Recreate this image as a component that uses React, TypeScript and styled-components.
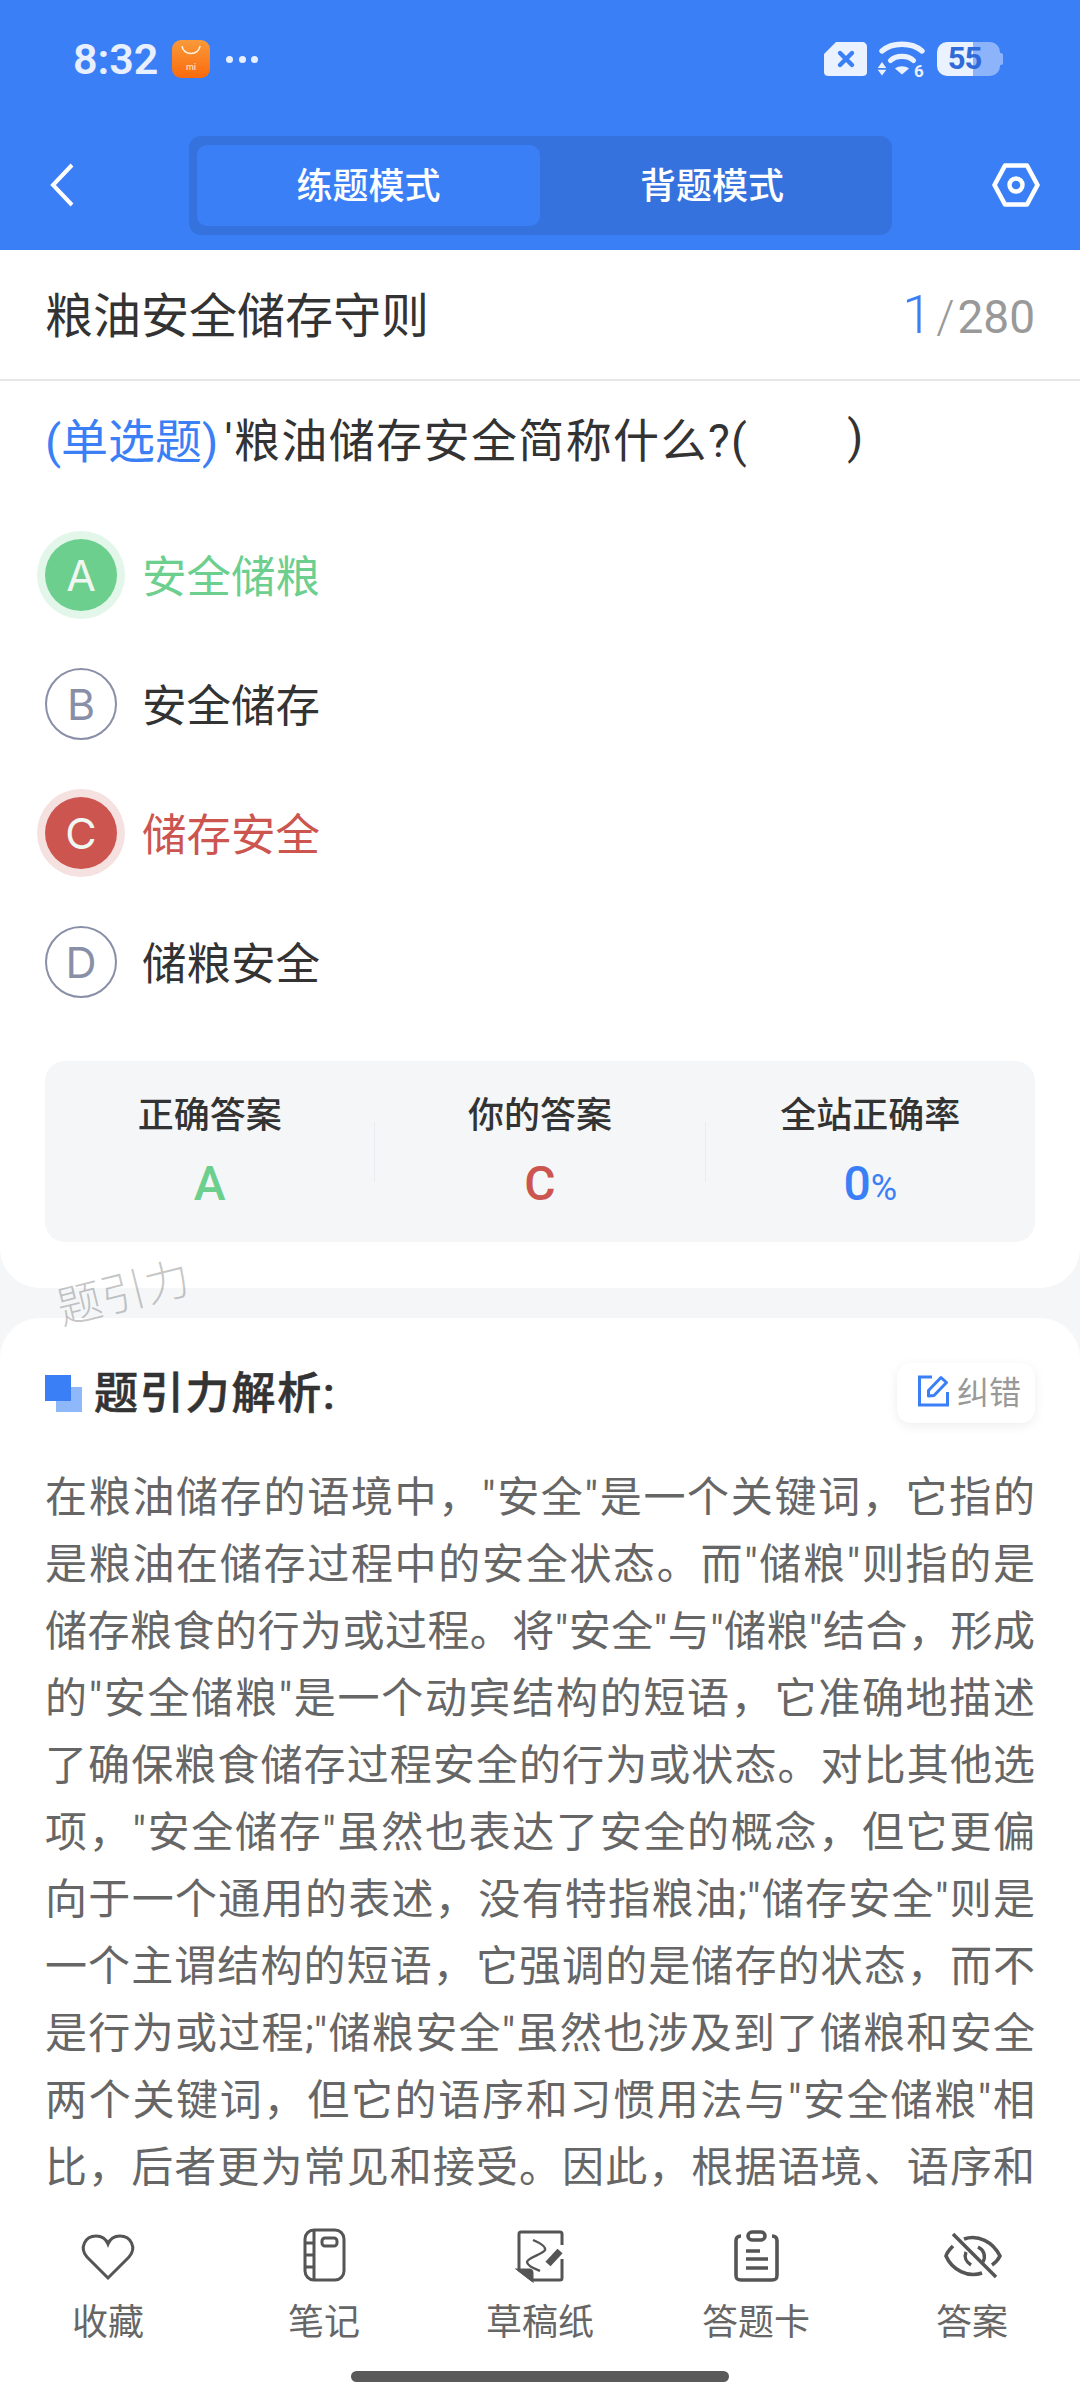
import styled, { createGlobalStyle } from 'styled-components';

const BLUE = '#3b7ff6';
const GREEN = '#6ccf8e';
const RED = '#cc5550';

const GlobalStyle = createGlobalStyle`
	html,
	body {
		margin: 0;
		padding: 0;
		background: #f4f6f8;
		font-family: Roboto, 'Noto Sans CJK SC', sans-serif;
	}
	* {
		box-sizing: border-box;
	}
`;

const OPTIONS = [
	{ key: 'A', text: '安全储粮', state: 'right' },
	{ key: 'B', text: '安全储存', state: 'idle' },
	{ key: 'C', text: '储存安全', state: 'wrong' },
	{ key: 'D', text: '储粮安全', state: 'idle' },
] as const;

const ANALYSIS = [
	'在粮油储存的语境中，"安全"是一个关键词，它指的',
	'是粮油在储存过程中的安全状态。而"储粮"则指的是',
	'储存粮食的行为或过程。将"安全"与"储粮"结合，形成',
	'的"安全储粮"是一个动宾结构的短语，它准确地描述',
	'了确保粮食储存过程安全的行为或状态。对比其他选',
	'项，"安全储存"虽然也表达了安全的概念，但它更偏',
	'向于一个通用的表述，没有特指粮油;"储存安全"则是',
	'一个主谓结构的短语，它强调的是储存的状态，而不',
	'是行为或过程;"储粮安全"虽然也涉及到了储粮和安全',
	'两个关键词，但它的语序和习惯用法与"安全储粮"相',
	'比，后者更为常见和接受。因此，根据语境、语序和',
];

const HeartIcon = () => (
	<TabSvg viewBox="0 0 64 64">
		<path d="M32 55 L11 34 C3 25 9 13 20 13 C26 13 30 16 32 21 C34 16 38 13 44 13 C55 13 61 25 53 34 Z" />
	</TabSvg>
);

const NotebookIcon = () => (
	<TabSvg viewBox="0 0 64 64">
		<rect x="13" y="7" width="39" height="50" rx="9" />
		<path d="M22 7 V57 M13 20 H22 M13 32 H22 M13 44 H22" />
		<rect x="30" y="15" width="15" height="8" rx="3" />
	</TabSvg>
);

const DraftIcon = () => (
	<TabSvg viewBox="0 0 64 64">
		<path d="M54 22 V11 C54 9.5 53 9 52 9 H13 C12 9 11 9.5 11 11 V47 L24 57 H52 C53 57 54 56.5 54 55 V36" />
		<path d="M25 17 C32 20 38 24 37 27 C35 31 19 35 19 39 C19 43 27 46 32 48" strokeWidth="2.4" />
		<path d="M40 41 L52 28" strokeWidth="7" />
		<path d="M11 47 H21 C23 47 24 48 24 50 V57 Z" fill="#555" />
	</TabSvg>
);

const ClipboardIcon = () => (
	<TabSvg viewBox="0 0 64 64" $weight={3.6}>
		<path d="M17 13 C13 13 12 15 12 18 V52 C12 56 13 57 17 57 H48 C52 57 53 56 53 52 V18 C53 15 52 13 48 13" />
		<rect x="24" y="9" width="17" height="8" rx="4" />
		<path d="M22 28 H36 M22 36 H44 M22 45 H44" />
	</TabSvg>
);

const EyeOffIcon = () => (
	<TabSvg viewBox="0 0 64 64" $weight={3.6}>
		<path d="M13 11 L56 54" />
		<path d="M24 16 C38 11 53 19 60 33 C58 37 55 40 52 42" />
		<path d="M13 23 C10 26 7 29 6 33 C12 47 28 55 42 50" />
		<path d="M38 24 C44 27 46 33 43 39 M26 29 C24 34 26 39 31 42" strokeWidth="3.4" />
	</TabSvg>
);

const TABS = [
	{ label: '收藏', Icon: HeartIcon },
	{ label: '笔记', Icon: NotebookIcon },
	{ label: '草稿纸', Icon: DraftIcon },
	{ label: '答题卡', Icon: ClipboardIcon },
	{ label: '答案', Icon: EyeOffIcon },
];

export default function App() {
	return (
		<>
			<GlobalStyle />
			<Screen>
				<Header>
					<StatusBar>
						<StatusLeft>
							<Clock>8:32</Clock>
							<AppBadge viewBox="0 0 38 38">
								<defs>
									<linearGradient id="badge" x1="0" y1="0" x2="0" y2="1">
										<stop offset="0" stopColor="#f99a3a" />
										<stop offset="1" stopColor="#fb6a0c" />
									</linearGradient>
								</defs>
								<rect width="38" height="38" rx="9" fill="url(#badge)" />
								<path d="M10 6 C11 16 27 16 28 6" fill="none" stroke="#fff3e2" strokeWidth="1.6" />
								<text x="19" y="30" textAnchor="middle" fontSize="9" fontWeight="500" fill="#ffdcb8">
									mi
								</text>
							</AppBadge>
							<Dots>
								<i />
								<i />
								<i />
							</Dots>
						</StatusLeft>
						<StatusRight>
							<svg width="44" height="35" viewBox="0 0 44 35">
								<path
									d="M12 0 H38 C41 0 43 2 43 5 V30 C43 33 41 34 38 34 H5 C2 34 0 33 0 30 V12 Z"
									fill="#eaf1ff"
								/>
								<path d="M16 11 L28 23 M28 11 L16 23" stroke={BLUE} strokeWidth="4.4" strokeLinecap="round" />
							</svg>
							<WifiIcon viewBox="-1 0 50 40">
								<g fill="none" stroke="#eaf1ff" strokeLinecap="round">
									<path d="M4 10 C14 1 34 1 44 10" strokeWidth="5.4" />
									<path d="M12.5 19.5 C18 14 30 14 35.5 19.5" strokeWidth="5.2" />
								</g>
								<g fill="#eaf1ff">
									<path d="M17 27.5 C21 24.5 27 24.5 31 27.5 L24 33.5 Z" />
									<path d="M4 21 L8.3 27 H-0.3 Z" />
									<path d="M-0.3 28.8 H8.3 L4 34.5 Z" />
									<text x="41" y="35.5" textAnchor="middle" fontSize="17" fontWeight="700" fontFamily="Roboto">
										6
									</text>
								</g>
							</WifiIcon>
							<Battery>55</Battery>
						</StatusRight>
					</StatusBar>
					<NavBar>
						<BackButton>
							<svg width="24" height="44" viewBox="0 0 24 44">
								<path d="M22 2 L3 22 L22 42" fill="none" stroke="#fff" strokeWidth="4" />
							</svg>
						</BackButton>
						<ModeSwitch>
							<ModeTab $active>练题模式</ModeTab>
							<ModeTab>背题模式</ModeTab>
						</ModeSwitch>
						<SettingsButton>
							<svg width="48" height="44" viewBox="0 0 48 44">
								<path d="M13 2.5 H35 L45.5 22 L35 41.5 H13 L2.5 22 Z" fill="none" stroke="#fff" strokeWidth="4.6" strokeLinejoin="round" />
								<circle cx="24" cy="22" r="6.5" fill="none" stroke="#fff" strokeWidth="4.4" />
							</svg>
						</SettingsButton>
					</NavBar>
				</Header>

				<Main>
					<QuestionCard>
						<TitleRow>
							<ChapterTitle>粮油安全储存守则</ChapterTitle>
							<Counter>
								<CounterCurrent>1</CounterCurrent>
								<CounterSlash>/</CounterSlash>280
							</Counter>
						</TitleRow>
						<Question>
							<QuestionType>(单选题)</QuestionType>
							<QuestionText>'粮油储存安全简称什么?(</QuestionText>
							<QuestionBlank />
							<QuestionText>)</QuestionText>
						</Question>
						<OptionList>
							{OPTIONS.map((option) => (
								<OptionRow key={option.key}>
									<OptionMark $state={option.state}>{option.key}</OptionMark>
									<OptionText $state={option.state}>{option.text}</OptionText>
								</OptionRow>
							))}
						</OptionList>
						<StatsPanel>
							<StatColumn>
								<StatLabel>正确答案</StatLabel>
								<StatValue $color={GREEN}>A</StatValue>
							</StatColumn>
							<StatDivider />
							<StatColumn>
								<StatLabel>你的答案</StatLabel>
								<StatValue $color={RED}>C</StatValue>
							</StatColumn>
							<StatDivider />
							<StatColumn>
								<StatLabel>全站正确率</StatLabel>
								<StatValue $color={BLUE}>
									0<small>%</small>
								</StatValue>
							</StatColumn>
						</StatsPanel>
					</QuestionCard>

					<Watermark>题引力</Watermark>

					<AnalysisCard>
						<AnalysisHead>
							<AnalysisTitle>
								<TitleMark />
								<TitleText>题引力解析:</TitleText>
							</AnalysisTitle>
							<ReportButton>
								<svg width="34" height="34" viewBox="0 0 34 34">
									<g fill="none" stroke={BLUE} strokeWidth="3">
										<path d="M15 4 H2.5 V32 H30.5 V19" />
										<path d="M11.5 17.5 L24 4.5 L29.5 9.5 L17 22.5 L11.5 23 Z" strokeLinejoin="round" />
									</g>
								</svg>
								纠错
							</ReportButton>
						</AnalysisHead>
						{ANALYSIS.map((line) => (
							<AnalysisLine key={line}>{line}</AnalysisLine>
						))}
					</AnalysisCard>
				</Main>

				<BottomBar>
					<TabRow>
						{TABS.map(({ label, Icon }) => (
							<TabItem key={label}>
								<Icon />
								<TabLabel>{label}</TabLabel>
							</TabItem>
						))}
					</TabRow>
					<HomeIndicator />
				</BottomBar>
			</Screen>
		</>
	);
}

const Screen = styled.div`
	width: 1080px;
	height: 2400px;
	display: flex;
	flex-direction: column;
	overflow: hidden;
	background: #f4f6f8;
`;

const Header = styled.header`
	flex: none;
	height: 250px;
	background: ${BLUE};
`;

const StatusBar = styled.div`
	height: 118px;
	padding: 0 80px 0 73px;
	display: flex;
	align-items: center;
	justify-content: space-between;
`;

const StatusLeft = styled.div`
	display: flex;
	align-items: center;
`;

const Clock = styled.span`
	font-family: Roboto, sans-serif;
	font-size: 43px;
	font-weight: 600;
	color: #e8efff;
`;

const AppBadge = styled.svg`
	width: 38px;
	height: 38px;
	margin-left: 14px;
`;

const Dots = styled.div`
	display: flex;
	gap: 5.5px;
	margin-left: 16px;

	i {
		width: 7px;
		height: 7px;
		border-radius: 50%;
		background: #e8efff;
	}
`;

const StatusRight = styled.div`
	display: flex;
	align-items: center;
	gap: 9px;
`;

const WifiIcon = styled.svg`
	width: 50px;
	height: 40px;
	margin-top: 4px;
`;

const Battery = styled.div`
	position: relative;
	width: 63px;
	height: 34px;
	margin-left: 1px;
	border-radius: 10px;
	background: linear-gradient(90deg, #eaf1ff 0 36px, #8db4fb 36px);
	font-family: Roboto, sans-serif;
	font-size: 31px;
	font-weight: 700;
	line-height: 34px;
	letter-spacing: -1px;
	text-align: center;
	color: #2f6bd8;
	padding-right: 8px;

	&::after {
		content: '';
		position: absolute;
		right: -3px;
		top: 11px;
		width: 3px;
		height: 12px;
		border-radius: 0 2px 2px 0;
		background: #8db4fb;
	}
`;

const NavBar = styled.div`
	display: grid;
	grid-template-columns: 189px 703px 1fr;
	padding-top: 18px;
`;

const BackButton = styled.div`
	display: flex;
	align-items: center;
	padding-left: 50px;
	padding-bottom: 2px;
`;

const ModeSwitch = styled.div`
	height: 99px;
	padding: 9px 8px;
	display: grid;
	grid-template-columns: 343px 1fr;
	background: #3572dd;
	border-radius: 12px;
`;

const ModeTab = styled.div<{ $active?: boolean }>`
	display: flex;
	align-items: center;
	justify-content: center;
	padding-bottom: 6px;
	border-radius: 10px;
	font-size: 36px;
	font-weight: 500;
	color: #fff;
	background: ${({ $active }) => ($active ? BLUE : 'transparent')};
`;

const SettingsButton = styled.div`
	display: flex;
	align-items: center;
	justify-content: flex-end;
	padding-right: 40px;
	padding-bottom: 2px;
`;

const Main = styled.main`
	position: relative;
	flex: 1;
	min-height: 0;
	overflow: hidden;
`;

const QuestionCard = styled.section`
	height: 1038px;
	background: #fff;
	border-radius: 0 0 40px 40px;
`;

const TitleRow = styled.div`
	height: 131px;
	padding: 0 45px;
	display: flex;
	align-items: center;
	justify-content: space-between;
	border-bottom: 2px solid #e6e6e6;
`;

const ChapterTitle = styled.h1`
	margin: 0 0 6px;
	font-size: 48px;
	font-weight: 400;
	color: #333;
`;

const Counter = styled.div`
	display: flex;
	align-items: baseline;
	font-family: Roboto, sans-serif;
	font-size: 46px;
	font-weight: 400;
	color: #999;
`;

const CounterCurrent = styled.span`
	font-size: 54px;
	font-weight: 300;
	color: ${BLUE};
`;

const CounterSlash = styled.span`
	margin: 0 3px 0 4px;
	font-weight: 300;
`;

const Question = styled.div`
	margin-top: 28px;
	padding: 0 45px 4px;
	height: 60px;
	display: flex;
	align-items: center;
	font-size: 46px;
	white-space: pre;
`;

const QuestionType = styled.span`
	font-size: 47px;
	color: ${BLUE};
`;

const QuestionText = styled.span`
	margin-left: 6px;
	color: #333;
	letter-spacing: 1.4px;
`;

const QuestionBlank = styled.span`
	width: 93px;
`;

const OptionList = styled.div`
	margin-top: 41px;
`;

const OptionRow = styled.div`
	height: 129px;
	padding-left: 45px;
	display: flex;
	align-items: center;
	gap: 25px;
`;

const stateColor = (state: string) => {
	if (state === 'right') return GREEN;
	if (state === 'wrong') return RED;
	return '#333';
};

const OptionMark = styled.div<{ $state: string }>`
	width: 72px;
	height: 72px;
	display: flex;
	align-items: center;
	justify-content: center;
	border-radius: 50%;
	font-family: Inter, sans-serif;
	font-size: 43px;
	font-weight: 400;
	color: ${({ $state }) => ($state === 'idle' ? '#8a8fa8' : '#f0f7f2')};
	background: ${({ $state }) => ($state === 'idle' ? '#fff' : stateColor($state))};
	border: ${({ $state }) => ($state === 'idle' ? '2px solid #8a8fa8' : 'none')};
	box-shadow: ${({ $state }) =>
		$state === 'right' ? '0 0 0 8px #e2f6ea' : $state === 'wrong' ? '0 0 0 8px #f6e1e1' : 'none'};
`;

const OptionText = styled.span<{ $state: string }>`
	margin-bottom: 2px;
	font-size: 44.5px;
	color: ${({ $state }) => stateColor($state)};
`;

const StatsPanel = styled.div`
	margin: 35px 45px 0;
	height: 181px;
	display: flex;
	background: #f4f6f8;
	border-radius: 20px;
`;

const StatColumn = styled.div`
	flex: 1;
	padding-top: 30px;
	display: flex;
	flex-direction: column;
	align-items: center;
`;

const StatDivider = styled.div`
	flex: none;
	width: 1px;
	height: 60px;
	margin-top: 61px;
	background: #e9ebee;
`;

const StatLabel = styled.div`
	height: 50px;
	font-size: 36px;
	line-height: 50px;
	font-weight: 500;
	color: #333;
`;

const StatValue = styled.div<{ $color: string }>`
	margin-top: 16px;
	height: 54px;
	font-family: Roboto, sans-serif;
	font-size: 48px;
	line-height: 54px;
	font-weight: 500;
	color: ${({ $color }) => $color};

	small {
		font-size: 36px;
		font-weight: 400;
	}
`;

const Watermark = styled.div`
	position: absolute;
	left: 56px;
	top: 1014px;
	z-index: 2;
	font-size: 45px;
	font-weight: 300;
	line-height: 60px;
	color: rgba(0, 0, 0, 0.22);
	transform: rotate(-14deg);
`;

const AnalysisCard = styled.section`
	margin-top: 30px;
	height: 900px;
	padding: 45px 45px 0;
	background: #fff;
	border-radius: 40px 40px 0 0;
`;

const AnalysisHead = styled.div`
	height: 60px;
	margin-bottom: 41px;
	display: flex;
	align-items: center;
	justify-content: space-between;
`;

const AnalysisTitle = styled.h2`
	margin: 0;
	display: flex;
	align-items: center;
	gap: 12px;
`;

const TitleText = styled.span`
	margin-bottom: 6px;
	font-size: 44px;
	font-weight: 500;
	letter-spacing: 1.8px;
	color: #333;
	-webkit-text-stroke: 0.6px #333;
`;

const TitleMark = styled.span`
	position: relative;
	width: 37px;
	height: 37px;

	&::before,
	&::after {
		content: '';
		position: absolute;
		width: 26px;
	}
	&::before {
		right: 0;
		bottom: 0;
		height: 25px;
		background: #8fb8fb;
	}
	&::after {
		left: 0;
		top: 0;
		height: 26px;
		background: ${BLUE};
	}
`;

const ReportButton = styled.div`
	width: 138px;
	height: 60px;
	padding: 0 0 6px 20px;
	display: flex;
	align-items: center;
	gap: 6px;
	background: #fff;
	border-radius: 14px;
	box-shadow: 0 3px 12px rgba(0, 0, 0, 0.07);
	font-size: 32px;
	color: #999;
`;

const AnalysisLine = styled.div`
	height: 67px;
	font-size: 42px;
	line-height: 67px;
	color: #666;
	text-align: justify;
	text-align-last: justify;
`;

const BottomBar = styled.nav`
	flex: none;
	height: 201px;
	padding-top: 24px;
	background: #fff;
	display: flex;
	flex-direction: column;
	align-items: center;
`;

const TabRow = styled.div`
	width: 100%;
	display: grid;
	grid-template-columns: repeat(5, 1fr);
`;

const TabItem = styled.div`
	display: flex;
	flex-direction: column;
	align-items: center;
	gap: 12px;
`;

const TabSvg = styled.svg<{ $weight?: number }>`
	width: 64px;
	height: 64px;
	fill: none;
	stroke: #555;
	stroke-width: ${({ $weight }) => $weight ?? 3}px;
`;

const TabLabel = styled.span`
	height: 48px;
	font-size: 36px;
	line-height: 48px;
	color: #666;
`;

const HomeIndicator = styled.div`
	margin-top: 24px;
	width: 378px;
	height: 11px;
	border-radius: 6px;
	background: #5a5a5a;
`;
